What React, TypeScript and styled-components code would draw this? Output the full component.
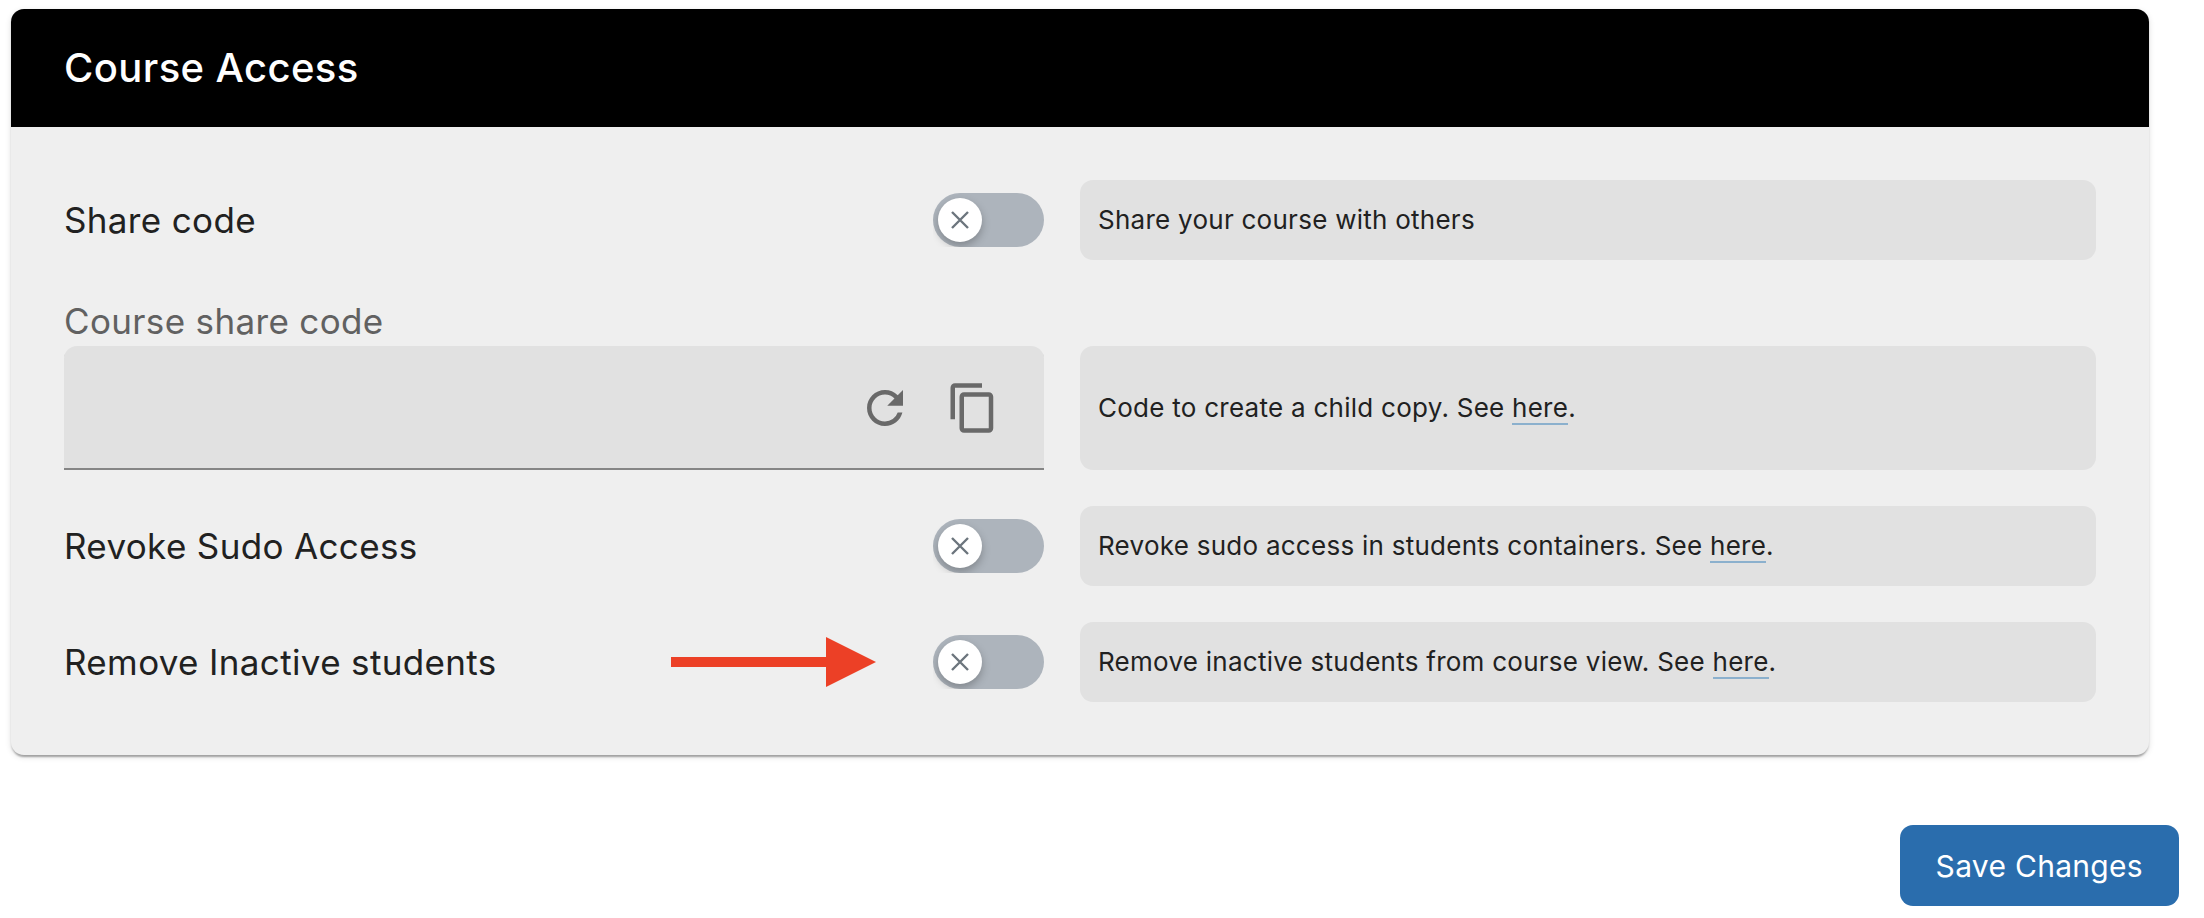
import React, { useState } from 'react';
import styled, { createGlobalStyle } from 'styled-components';

const GlobalStyle = createGlobalStyle`
  *, *::before, *::after { box-sizing: border-box; }
  body {
    margin: 0;
    background: #ffffff;
    color: #212121;
    font-family: Inter, 'Liberation Sans', sans-serif;
    letter-spacing: 0.01em;
  }
`;

const Page = styled.main`
  padding: 9px 25px 12px 11px;
`;

const Card = styled.section`
  margin-right: 30px;
  border-radius: 13px;
  background: #efefef;
  box-shadow:
    0 4px 2px -2px rgba(0, 0, 0, 0.2),
    0 2px 2px 0 rgba(0, 0, 0, 0.14),
    0 2px 6px 0 rgba(0, 0, 0, 0.12);
`;

const CardHeader = styled.header`
  display: flex;
  align-items: center;
  height: 118px;
  padding: 0 53px;
  border-radius: 13px 13px 0 0;
  background: #000000;
`;

const Title = styled.h2`
  margin: 0;
  color: #ffffff;
  font-size: 40px;
  font-weight: 500;
  line-height: 48px;
  letter-spacing: 0.01em;
`;

const Settings = styled.div`
  display: grid;
  gap: 36px;
  padding: 53px;
`;

const Row = styled.div`
  display: grid;
  grid-template-columns: minmax(0, 980fr) minmax(0, 1016fr);
  column-gap: 36px;
  align-items: end;
`;

const ToggleCell = styled.div`
  display: flex;
  align-items: center;
  gap: 57px;
  height: 80px;
`;

const Label = styled.label<{ $muted?: boolean }>`
  flex: 1;
  color: ${(p) => (p.$muted ? '#616161' : '#212121')};
  font-size: 35px;
  line-height: 50px;
  letter-spacing: 0.01em;
`;

const SwitchBox = styled.span`
  position: relative;
  flex: none;
  width: 111px;
  height: 54px;
  overflow: hidden;
`;

const SwitchInput = styled.input`
  appearance: none;
  display: block;
  width: 100%;
  height: 100%;
  margin: 0;
  border-radius: 27px;
  background: #adb4bc;
  cursor: pointer;

  &:checked { background: #2a6dad; }
`;

const Thumb = styled.span<{ $on: boolean }>`
  position: absolute;
  top: 5px;
  left: ${(p) => (p.$on ? '62px' : '5px')};
  display: grid;
  place-items: center;
  width: 44px;
  height: 44px;
  border-radius: 50%;
  background: #ffffff;
  color: #6c757d;
  box-shadow: 0 4px 8px rgba(0, 0, 0, 0.25);
  pointer-events: none;
`;

const Field = styled.div`
  display: flex;
  align-items: center;
  gap: 34px;
  height: 124px;
  padding: 0 44px 0 16px;
  border-radius: 13px 13px 0 0;
  background: #e1e1e1;
  box-shadow: inset 0 -2px #858585;
`;

const FieldCell = styled.div`
  display: flex;
  flex-direction: column;
`;

const CodeInput = styled.input`
  flex: 1;
  min-width: 0;
  border: 0;
  outline: 0;
  background: transparent;
  color: #212121;
  font: inherit;
  font-size: 35px;
`;

const IconButton = styled.button`
  display: block;
  flex: none;
  width: 54px;
  height: 54px;
  padding: 0;
  border: 0;
  background: transparent;
  color: #696969;
  cursor: pointer;
`;

const Note = styled.p<{ $tall?: boolean }>`
  display: flex;
  align-items: center;
  height: ${(p) => (p.$tall ? '124px' : '80px')};
  margin: 0;
  padding: 0 18px;
  border-radius: 13px;
  background: #e1e1e1;
  font-size: 26px;
  line-height: 36px;
  letter-spacing: 0.01em;
`;

const NoteLink = styled.a`
  border-bottom: 2px solid #8bb0cd;
  color: inherit;
  text-decoration: none;
`;

const Actions = styled.div`
  display: flex;
  justify-content: flex-end;
  margin-top: 70px;
`;

const SaveButton = styled.button`
  height: 81px;
  padding: 0 36px;
  border: 0;
  border-radius: 13px;
  background: #2a6dad;
  color: #ffffff;
  font: inherit;
  font-size: 30px;
  letter-spacing: 0.01em;
  cursor: pointer;
`;

function CrossIcon() {
  return (
    <svg width="18" height="18" viewBox="0 0 18 18" fill="none" stroke="currentColor" strokeWidth="2.4" aria-hidden="true">
      <path d="M1 1 17 17M17 1 1 17" />
    </svg>
  );
}

function RefreshIcon() {
  return (
    <svg width="54" height="54" viewBox="0 0 24 24" fill="currentColor" aria-hidden="true">
      <path d="M17.65 6.35A7.958 7.958 0 0 0 12 4c-4.42 0-7.99 3.58-7.99 8s3.57 8 7.99 8c3.73 0 6.84-2.55 7.73-6h-2.08A5.99 5.99 0 0 1 12 18c-3.31 0-6-2.69-6-6s2.69-6 6-6c1.66 0 3.14.69 4.22 1.78L13 11h7V4l-2.35 2.35z" />
    </svg>
  );
}

function CopyIcon() {
  return (
    <svg width="54" height="54" viewBox="0 0 24 24" fill="currentColor" aria-hidden="true">
      <path d="M16 1H4c-1.1 0-2 .9-2 2v14h2V3h12V1zm3 4H8c-1.1 0-2 .9-2 2v14c0 1.1.9 2 2 2h11c1.1 0 2-.9 2-2V7c0-1.1-.9-2-2-2zm0 16H8V7h11v14z" />
    </svg>
  );
}

function PointerArrow() {
  return (
    <svg width="205" height="50" viewBox="0 0 205 50" fill="#ec4026" aria-hidden="true">
      <path d="M0 20h155V0l50 25-50 25V30H0z" />
    </svg>
  );
}

type ToggleRowProps = {
  id: string;
  label: string;
  pointed?: boolean;
  children: React.ReactNode;
};

function ToggleRow({ id, label, pointed, children }: ToggleRowProps) {
  const [on, setOn] = useState(false);
  return (
    <Row>
      <ToggleCell>
        <Label htmlFor={id}>{label}</Label>
        {pointed && <PointerArrow />}
        <SwitchBox>
          <SwitchInput id={id} type="checkbox" role="switch" checked={on} onChange={(e) => setOn(e.target.checked)} />
          <Thumb $on={on}>{!on && <CrossIcon />}</Thumb>
        </SwitchBox>
      </ToggleCell>
      <Note>{children}</Note>
    </Row>
  );
}

export default function App() {
  const [code, setCode] = useState('');
  return (
    <>
      <GlobalStyle />
      <Page>
        <Card>
          <CardHeader>
            <Title>Course Access</Title>
          </CardHeader>
          <Settings>
            <ToggleRow id="share" label="Share code">
              <span>Share your course with others</span>
            </ToggleRow>
            <Row>
              <FieldCell>
                <Label htmlFor="code" $muted>Course share code</Label>
                <Field>
                  <CodeInput id="code" type="text" value={code} onChange={(e) => setCode(e.target.value)} />
                  <IconButton type="button" aria-label="Generate a new code"><RefreshIcon /></IconButton>
                  <IconButton type="button" aria-label="Copy code"><CopyIcon /></IconButton>
                </Field>
              </FieldCell>
              <Note $tall>
                <span>Code to create a child copy. See <NoteLink href="#child-copy">here</NoteLink>.</span>
              </Note>
            </Row>
            <ToggleRow id="sudo" label="Revoke Sudo Access">
              <span>Revoke sudo access in students containers. See <NoteLink href="#sudo-access">here</NoteLink>.</span>
            </ToggleRow>
            <ToggleRow id="inactive" label="Remove Inactive students" pointed>
              <span>Remove inactive students from course view. See <NoteLink href="#inactive-students">here</NoteLink>.</span>
            </ToggleRow>
          </Settings>
        </Card>
        <Actions>
          <SaveButton type="button">Save Changes</SaveButton>
        </Actions>
      </Page>
    </>
  );
}
